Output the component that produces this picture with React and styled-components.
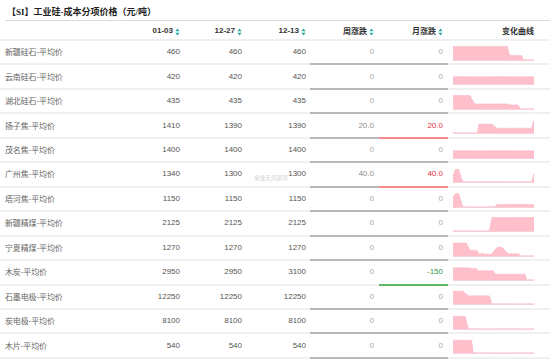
import React from "react";
import styled, { createGlobalStyle } from "styled-components";

const GlobalStyle = createGlobalStyle`
  html, body {
    margin: 0;
    padding: 0;
    background: #fff;
  }
  body {
    font-family: "Liberation Sans", "Noto Sans CJK SC", sans-serif;
  }
`;

const Page = styled.div`
  position: relative;
  width: 550px;
  height: 364px;
  overflow: hidden;
  background: #fff;
`;

const Title = styled.div`
  box-sizing: border-box;
  height: 21px;
  margin-left: 5px;
  padding: 3px 0 0 2px;
  display: flex;
  align-items: center;
  border-bottom: 1px solid #dcdcdc;
  font-family: "Liberation Serif", "Noto Sans CJK SC", serif;
  font-size: 9px;
  font-weight: 700;
  color: #222;
`;

const Grid = styled.div`
  display: grid;
  grid-template-columns: 125px 59px 62px 64px 69px 69px 1fr;
`;

const HeadRow = styled(Grid)`
  height: 20px;
`;

const HeadCell = styled.div`
  box-sizing: border-box;
  display: flex;
  align-items: center;
  justify-content: flex-end;
  gap: 2px;
  padding-right: ${(p) => p.$pr || 4}px;
  border-bottom: 2px solid #f0f0f0;
  font-size: 8px;
  font-weight: 700;
  color: #333;
  font-family: "Liberation Sans", "Noto Sans CJK SC", sans-serif;
`;

const SortMark = styled.svg`
  margin-top: 3px;
  flex: none;
`;

const Row = styled(Grid)`
  height: 24.46px;
`;

const Cell = styled.div`
  box-sizing: border-box;
  display: flex;
  align-items: center;
  padding-bottom: 1px;
  border-bottom: 2px solid #f0f0f0;
  font-size: 8px;
`;

const NameCell = styled(Cell)`
  padding-left: 5px;
  color: #666;
  font-family: "Noto Sans CJK SC", sans-serif;
  letter-spacing: -0.15px;
`;

const NumCell = styled(Cell)`
  justify-content: flex-end;
  padding-right: 4px;
  color: #555;
`;

const lineColor = {
  flat: "#b9b9b9",
  up: "#f28a8a",
  down: "#62b862",
  none: "#f0f0f0",
};

const textColor = {
  zero: "#a8a8a8",
  gray: "#8a8a8a",
  up: "#e2303a",
  down: "#2f9a3a",
};

const ChangeCell = styled(Cell)`
  justify-content: flex-end;
  padding-right: 5px;
  color: ${(p) => textColor[p.$text]};
  border-bottom-color: ${(p) => lineColor[p.$line]};
`;

const ChartCell = styled(Cell)`
  align-items: flex-end;
  padding: 0 0 2.5px 5px;
`;

const Watermark = styled.div`
  position: absolute;
  left: 254px;
  top: 173px;
  font-family: "Noto Sans CJK SC", sans-serif;
  font-size: 5.7px;
  color: #d6d6d6;
  pointer-events: none;
`;

function SortIcon() {
  return (
    <SortMark width="5" height="8" viewBox="0 0 5 8">
      <path d="M2.5 0.4 L4.6 3.2 L0.4 3.2 Z" fill="#26a69a" />
      <path d="M0.4 4.8 L4.6 4.8 L2.5 7.6 Z" fill="#26a69a" />
    </SortMark>
  );
}

function Spark({ points }) {
  const W = 81;
  const H = 15;
  const pts = points.map(([x, h]) => [x * W, H - 0.5 - h * (H - 1)]);
  const top = pts.map(([x, y]) => `${x.toFixed(2)},${y.toFixed(2)}`).join(" L");
  const area = `M0,${H} L${top} L${W},${H} Z`;
  return (
    <svg width={W} height={H} viewBox={`0 0 ${W} ${H}`}>
      <path d={area} fill="#ffc0cb" />
      <path d={`M${top}`} fill="none" stroke="#f3a9b9" strokeWidth="0.7" strokeDasharray="1.5 1" />
      <line x1="0" y1={H - 0.3} x2={W} y2={H - 0.3} stroke="#ece4ee" strokeWidth="0.6" />
    </svg>
  );
}

const rows = [
  { name: "新疆硅石-平均价", a: "460", b: "460", c: "460", w: "0", m: "0", wt: "zero", mt: "zero", wl: "flat", ml: "flat",
    chart: [[0, 1], [0.67, 1], [0.7, 0.35], [0.85, 0.35], [0.87, 0.06], [1, 0.06]] },
  { name: "云南硅石-平均价", a: "420", b: "420", c: "420", w: "0", m: "0", wt: "zero", mt: "zero", wl: "flat", ml: "flat",
    chart: [[0, 0.55], [1, 0.55]] },
  { name: "湖北硅石-平均价", a: "435", b: "435", c: "435", w: "0", m: "0", wt: "zero", mt: "zero", wl: "flat", ml: "flat",
    chart: [[0, 1], [0.21, 1], [0.27, 0.4], [0.68, 0.4], [0.7, 0.33], [0.8, 0.33], [0.83, 0.06], [1, 0.06]] },
  { name: "扬子焦-平均价", a: "1410", b: "1390", c: "1390", w: "20.0", m: "20.0", wt: "gray", mt: "up", wl: "flat", ml: "up",
    chart: [[0, 0.05], [0.3, 0.05], [0.32, 0.67], [0.48, 0.67], [0.54, 0.38], [0.97, 0.38], [1, 1]] },
  { name: "茂名焦-平均价", a: "1400", b: "1400", c: "1400", w: "0", m: "0", wt: "zero", mt: "zero", wl: "flat", ml: "flat",
    chart: [[0, 0.55], [1, 0.55]] },
  { name: "广州焦-平均价", a: "1340", b: "1300", c: "1300", w: "40.0", m: "40.0", wt: "gray", mt: "up", wl: "flat", ml: "up",
    chart: [[0, 0.5], [0.03, 0.93], [0.07, 0.93], [0.12, 0.05], [0.97, 0.05], [1, 0.67]] },
  { name: "塔河焦-平均价", a: "1150", b: "1150", c: "1150", w: "0", m: "0", wt: "zero", mt: "zero", wl: "flat", ml: "flat",
    chart: [[0, 0.7], [0.03, 1], [0.07, 1], [0.12, 0.05], [0.52, 0.05], [0.54, 0.22], [1, 0.22]] },
  { name: "新疆精煤-平均价", a: "2125", b: "2125", c: "2125", w: "0", m: "0", wt: "zero", mt: "zero", wl: "flat", ml: "flat",
    chart: [[0, 0.05], [0.45, 0.05], [0.48, 1], [1, 1]] },
  { name: "宁夏精煤-平均价", a: "1270", b: "1270", c: "1270", w: "0", m: "0", wt: "zero", mt: "zero", wl: "flat", ml: "flat",
    chart: [[0, 0.96], [0.165, 0.96], [0.21, 0.45], [0.29, 0.45], [0.33, 0.16], [0.36, 0.24], [0.4, 0.16], [0.475, 0.16],
      [0.5, 0.35], [0.53, 0.58], [0.56, 0.68], [0.6, 0.66], [0.63, 0.52], [0.67, 0.25], [0.69, 0.2], [0.81, 0.2], [0.83, 0.05], [1, 0.05]] },
  { name: "木炭-平均价", a: "2950", b: "2950", c: "3100", w: "0", m: "-150", wt: "zero", mt: "down", wl: "none", ml: "down",
    chart: [[0, 0.91], [0.19, 0.91], [0.23, 0.85], [0.29, 0.85], [0.31, 0.7], [0.5, 0.7], [0.52, 0.45], [0.89, 0.45], [0.91, 0.05], [1, 0.05]] },
  { name: "石墨电极-平均价", a: "12250", b: "12250", c: "12250", w: "0", m: "0", wt: "zero", mt: "zero", wl: "flat", ml: "flat",
    chart: [[0, 0.95], [0.12, 0.95], [0.19, 0.62], [0.45, 0.62], [0.48, 0.05], [1, 0.05]] },
  { name: "炭电极-平均价", a: "8100", b: "8100", c: "8100", w: "0", m: "0", wt: "zero", mt: "zero", wl: "flat", ml: "flat",
    chart: [[0, 0.93], [0.15, 0.93], [0.19, 0.05], [1, 0.05]] },
  { name: "木片-平均价", a: "540", b: "540", c: "540", w: "0", m: "0", wt: "zero", mt: "zero", wl: "flat", ml: "flat",
    chart: [[0, 0.95], [0.23, 0.95], [0.25, 0.05], [1, 0.05]] },
];

export default function App() {
  return (
    <Page>
      <GlobalStyle />
      <Title>【SI】工业硅-成本分项价格（元/吨）</Title>
      <HeadRow>
        <HeadCell />
        <HeadCell>01-03<SortIcon /></HeadCell>
        <HeadCell>12-27<SortIcon /></HeadCell>
        <HeadCell>12-13<SortIcon /></HeadCell>
        <HeadCell $pr={5}>周涨跌<SortIcon /></HeadCell>
        <HeadCell $pr={5}>月涨跌<SortIcon /></HeadCell>
        <HeadCell $pr={16}>变化曲线</HeadCell>
      </HeadRow>
      {rows.map((r) => (
        <Row key={r.name}>
          <NameCell>{r.name}</NameCell>
          <NumCell>{r.a}</NumCell>
          <NumCell>{r.b}</NumCell>
          <NumCell>{r.c}</NumCell>
          <ChangeCell $text={r.wt} $line={r.wl}>{r.w}</ChangeCell>
          <ChangeCell $text={r.mt} $line={r.ml}>{r.m}</ChangeCell>
          <ChartCell>
            <Spark points={r.chart} />
          </ChartCell>
        </Row>
      ))}
      <Watermark>紫金天风期货</Watermark>
    </Page>
  );
}
